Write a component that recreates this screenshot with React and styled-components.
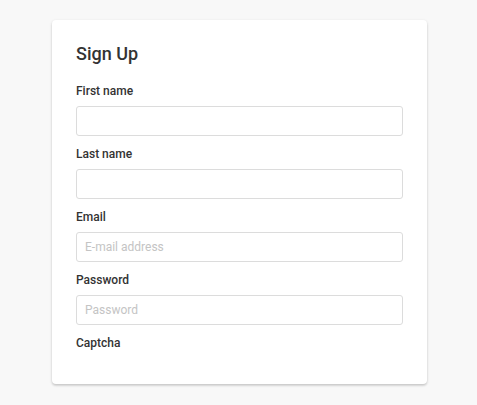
import React from "react";
import styled, { createGlobalStyle } from "styled-components";

const GlobalStyle = createGlobalStyle`
  html, body {
    margin: 0;
    padding: 0;
    background: #f8f8f8;
    font-family: Roboto, "Liberation Sans", Arial, sans-serif;
    color: #333;
  }
  * { box-sizing: border-box; }
`;

const Page = styled.div`
  display: flex;
  justify-content: flex-start;
  padding: 20px 0 0 52px;
  min-height: 405px;
`;

const Card = styled.form`
  width: 375px;
  align-self: flex-start;
  background: #fff;
  border-radius: 4px;
  padding: 23px 24px;
  box-shadow: 0 1px 3px rgba(0, 0, 0, 0.16), 0 2px 2px rgba(0, 0, 0, 0.08);
`;

const Title = styled.h2`
  margin: 0 0 17px;
  font-size: 18px;
  line-height: 22px;
  font-weight: 500;
  color: #333;
`;

const Field = styled.div`
  display: flex;
  flex-direction: column;
  margin-bottom: 9px;
`;

const Label = styled.label`
  font-size: 12px;
  line-height: 18px;
  font-weight: 500;
  color: #333;
  margin-bottom: ${(p) => (p.$bare ? "0" : "6px")};
`;

const Input = styled.input`
  height: 30px;
  width: 100%;
  border: 1px solid #dcdcdc;
  border-radius: 3px;
  padding: 0 8px;
  font-family: Roboto, "Liberation Sans", Arial, sans-serif;
  font-size: 12px;
  color: #333;
  background: #fff;
  outline: none;
  &::placeholder {
    color: #c4c4c4;
  }
`;

const fields = [
  { id: "first", label: "First name", placeholder: "" },
  { id: "last", label: "Last name", placeholder: "" },
  { id: "email", label: "Email", placeholder: "E-mail address" },
  { id: "password", label: "Password", placeholder: "Password", type: "password" },
];

export default function App() {
  return (
    <>
      <GlobalStyle />
      <Page>
        <Card onSubmit={(e) => e.preventDefault()}>
          <Title>Sign Up</Title>
          {fields.map((f) => (
            <Field key={f.id}>
              <Label htmlFor={f.id}>{f.label}</Label>
              <Input id={f.id} type={f.type || "text"} placeholder={f.placeholder} />
            </Field>
          ))}
          <Field>
            <Label $bare>Captcha</Label>
          </Field>
        </Card>
      </Page>
    </>
  );
}
